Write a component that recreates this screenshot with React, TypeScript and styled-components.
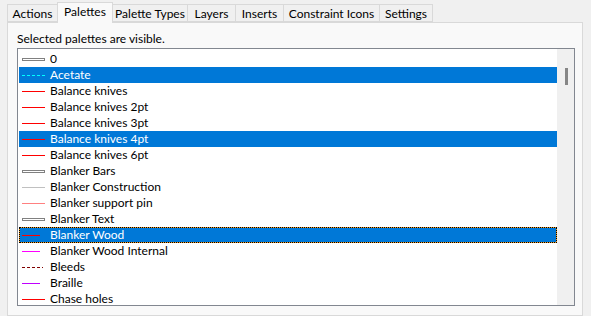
import React from "react";
import styled, { createGlobalStyle } from "styled-components";

const GlobalStyle = createGlobalStyle`
  html, body {
    margin: 0;
    padding: 0;
    background: #f0f0f0;
  }
  body {
    font-family: Lato, "Noto Sans", sans-serif;
    font-size: 12px;
    color: #000;
  }
`;

const Window = styled.div`
  width: 591px;
  height: 316px;
  box-sizing: border-box;
  padding: 0 8px 0 7px;
  display: flex;
  flex-direction: column;
  overflow: hidden;
  background: #f0f0f0;
`;

const TabBar = styled.div`
  display: flex;
  align-items: flex-end;
  height: 22px;
  position: relative;
  z-index: 1;
`;

const Tab = styled.div<{ $active?: boolean; $w: number }>`
  box-sizing: border-box;
  width: ${(p) => p.$w}px;
  height: ${(p) => (p.$active ? 21 : 18)}px;
  margin-bottom: ${(p) => (p.$active ? -1 : 0)}px;
  margin-left: -1px;
  border: 1px solid #d9d9d9;
  border-bottom: ${(p) => (p.$active ? "none" : "1px solid #d9d9d9")};
  background: ${(p) => (p.$active ? "#f9f9f9" : "#f0f0f0")};
  display: flex;
  align-items: center;
  justify-content: center;
  padding-bottom: ${(p) => (p.$active ? 3 : 0)}px;
  white-space: nowrap;
  z-index: ${(p) => (p.$active ? 2 : 1)};

  &:first-child {
    margin-left: 0;
  }
`;

const Panel = styled.div`
  flex: 1;
  box-sizing: border-box;
  background: #f9f9f9;
  border: 1px solid #d9d9d9;
  padding: 8px 8px 0 9px;
  display: flex;
  flex-direction: column;
  gap: 1px;
`;

const Caption = styled.div`
  line-height: 16px;
  height: 16px;
`;

const ListBox = styled.div`
  box-sizing: border-box;
  width: 558px;
  height: 258px;
  border: 1px solid #828790;
  background: #fff;
  display: flex;
  overflow: hidden;
`;

const Rows = styled.div`
  flex: 1;
  padding: 2px 0 0 1px;
  overflow: hidden;
`;

const Row = styled.div<{ $selected?: boolean; $focused?: boolean }>`
  height: 16px;
  display: flex;
  align-items: center;
  gap: 5px;
  padding-left: 3px;
  box-sizing: border-box;
  background: ${(p) => (p.$selected ? "#0078d7" : "transparent")};
  color: ${(p) => (p.$selected ? "#fff" : "#000")};
  white-space: nowrap;
  ${(p) =>
    p.$focused &&
    `
    box-shadow: inset 0 0 0 1px #f29b1f;
    outline: 1px dotted #000;
    outline-offset: -1px;
  `}
`;

const Label = styled.span`
  line-height: 16px;
`;

const ScrollTrack = styled.div`
  width: 17px;
  background: #f0f0f0;
  display: flex;
  justify-content: center;
  padding-top: 19px;
  box-sizing: border-box;
`;

const Thumb = styled.div`
  width: 3px;
  height: 17px;
  margin-left: 1px;
  background: #868686;
`;

type Kind = "double" | "solid" | "dashed";

interface Palette {
  name: string;
  kind: Kind;
  color: string;
  len?: number;
  selected?: boolean;
  focused?: boolean;
}

const palettes: Palette[] = [
  { name: "0", kind: "double", color: "#808080" },
  { name: "Acetate", kind: "dashed", color: "#00ffff", selected: true },
  { name: "Balance knives", kind: "solid", color: "#ff0000" },
  { name: "Balance knives 2pt", kind: "solid", color: "#ff0000" },
  { name: "Balance knives 3pt", kind: "solid", color: "#ff0000" },
  { name: "Balance knives 4pt", kind: "solid", color: "#ff0000", selected: true },
  { name: "Balance knives 6pt", kind: "solid", color: "#ff0000" },
  { name: "Blanker Bars", kind: "double", color: "#808080" },
  { name: "Blanker Construction", kind: "solid", color: "#c0c0c0" },
  { name: "Blanker support pin", kind: "solid", color: "#ff8080" },
  { name: "Blanker Text", kind: "double", color: "#808080" },
  { name: "Blanker Wood", kind: "solid", color: "#ff0000", len: 18, selected: true, focused: true },
  { name: "Blanker Wood Internal", kind: "solid", color: "#ff00ff", len: 18 },
  { name: "Bleeds", kind: "dashed", color: "#800000", len: 21 },
  { name: "Braille", kind: "solid", color: "#c000ff", len: 18 },
  { name: "Chase holes", kind: "solid", color: "#ff0000" },
];

function LineSample({ kind, color, len = 23 }: { kind: Kind; color: string; len?: number }) {
  return (
    <svg width="23" height="16" viewBox="0 0 23 16" style={{ flex: "none" }}>
      {kind === "double" && (
        <rect x="0.5" y="7.5" width="22" height="2" fill="#fff" stroke={color} strokeWidth="1" />
      )}
      {kind === "solid" && <line x1="0" y1="8.5" x2={len} y2="8.5" stroke={color} strokeWidth="1" />}
      {kind === "dashed" && (
        <line
          x1="0"
          y1="8.5"
          x2={len}
          y2="8.5"
          stroke={color}
          strokeWidth="1"
          strokeDasharray="3 2"
        />
      )}
    </svg>
  );
}

const tabs = [
  { label: "Actions", w: 51 },
  { label: "Palettes", w: 56 },
  { label: "Palette Types", w: 76 },
  { label: "Layers", w: 49 },
  { label: "Inserts", w: 49 },
  { label: "Constraint Icons", w: 97 },
  { label: "Settings", w: 54 },
];

export default function App() {
  return (
    <>
      <GlobalStyle />
      <Window>
        <TabBar>
          {tabs.map((t) => (
            <Tab key={t.label} $w={t.w} $active={t.label === "Palettes"}>
              {t.label}
            </Tab>
          ))}
        </TabBar>
        <Panel>
          <Caption>Selected palettes are visible.</Caption>
          <ListBox>
            <Rows>
              {palettes.map((p) => (
                <Row key={p.name} $selected={p.selected} $focused={p.focused}>
                  <LineSample kind={p.kind} color={p.color} len={p.len} />
                  <Label>{p.name}</Label>
                </Row>
              ))}
            </Rows>
            <ScrollTrack>
              <Thumb />
            </ScrollTrack>
          </ListBox>
        </Panel>
      </Window>
    </>
  );
}
